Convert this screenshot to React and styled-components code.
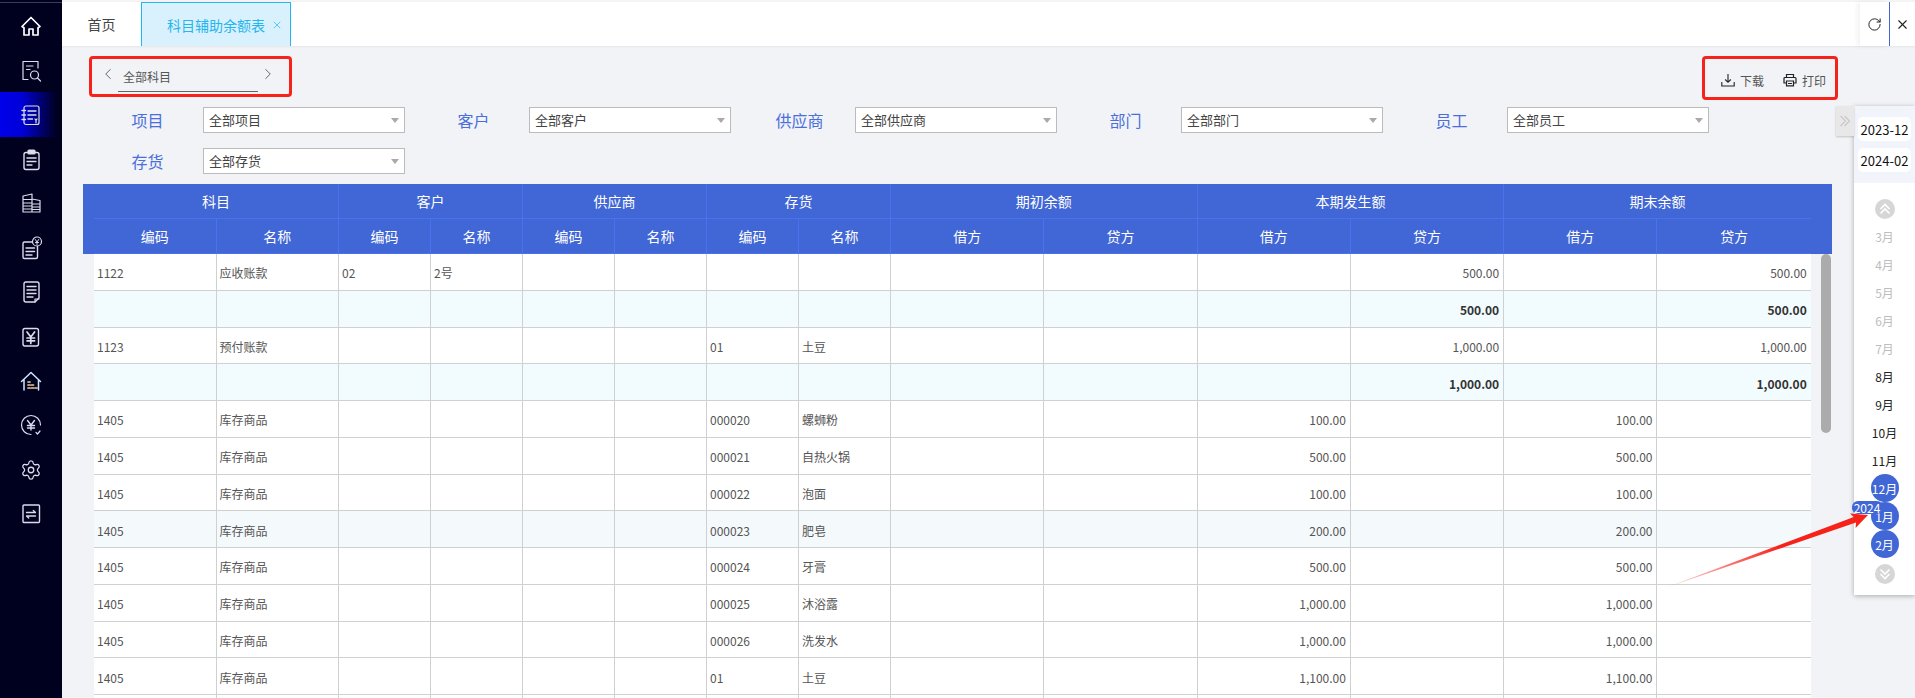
import React from "react";
import styled, { createGlobalStyle } from "styled-components";
import { ChevronLeft, ChevronRight, RotateCw, X, Settings } from "lucide-react";

const Global = createGlobalStyle`
  html, body { margin: 0; padding: 0; height: 100%; overflow: hidden; }
  body { font-family: "Noto Sans CJK SC", "Liberation Sans", sans-serif; }
  #root { height: 100%; }
  * { box-sizing: border-box; }
`;

const BLUE = "#4166d5";
const RED = "#f7231b";

const Page = styled.div`
  position: relative;
  display: flex;
  width: 1915px;
  height: 698px;
  overflow: hidden;
  background: #f1f3f6;
`;

const Sidebar = styled.nav`
  flex: 0 0 62px;
  background: #00001f;
  padding-top: 3.6px;
  position: relative;
  &::before {
    content: "";
    position: absolute;
    left: 0;
    right: 0;
    top: 2px;
    height: 1px;
    background: #3c3c52;
  }
`;

const NavItem = styled.div`
  height: 44.4px;
  display: flex;
  align-items: center;
  justify-content: center;
  color: #dcdcec;
  background: ${(p) =>
    p.$active ? "linear-gradient(90deg, #0000ea 0%, #0000d8 35%, #00001f 92%)" : "transparent"};
`;

const Main = styled.div`
  flex: 1;
  min-width: 0;
  display: flex;
  flex-direction: column;
  padding-top: 2px;
  background: #f4f4f4;
`;

const TabBar = styled.div`
  flex: 0 0 44px;
  display: flex;
  background: #fff;
  box-shadow: 0 1px 2px rgba(0, 0, 0, 0.06);
  position: relative;
`;

const HomeTab = styled.div`
  width: 79px;
  display: flex;
  align-items: center;
  justify-content: center;
  font-size: 14px;
  color: #444;
`;

const ActiveTab = styled.div`
  width: 150px;
  display: flex;
  align-items: center;
  padding-left: 25px;
  gap: 6px;
  font-size: 14px;
  color: #26b5ec;
  background: #d9f1fd;
  border: 1px solid #20b9ef;
  border-bottom: none;
`;

const TabControls = styled.div`
  margin-left: auto;
  display: flex;
`;

const TabControl = styled.div`
  width: ${(p) => p.$w}px;
  display: flex;
  align-items: center;
  justify-content: center;
  color: #222;
  ${(p) => p.$line && `border-left: 1px solid ${BLUE};`}
  ${(p) => p.$shadow && `box-shadow: -3px 0 4px rgba(0,0,0,0.05);`}
`;

const Content = styled.div`
  flex: 1;
  min-height: 0;
  background: #f1f3f6;
  display: flex;
  flex-direction: column;
  overflow: hidden;
`;

const Toolbar = styled.div`
  display: flex;
  justify-content: space-between;
  align-items: flex-start;
  padding: 10px 77px 0 27px;
`;

const Marked = styled.div`
  border: 3px solid ${RED};
  border-radius: 4px;
  display: flex;
`;

const SubjectPicker = styled(Marked)`
  width: 203px;
  height: 41px;
  align-items: flex-start;
  padding: 6px 12px 0 7px;
  color: #555;
  justify-content: space-between;
`;

const SubjectName = styled.div`
  width: 140px;
  height: 27px;
  margin-top: 0;
  padding: 3px 0 0 5px;
  font-size: 12px;
  line-height: 18px;
  color: #555;
  border-bottom: 1px solid #666;
`;

const Actions = styled(Marked)`
  width: 136px;
  height: 44px;
  align-items: center;
  padding: 4px 0 0 16px;
  gap: 19px;
`;

const Action = styled.div`
  display: flex;
  align-items: center;
  gap: 5px;
  font-size: 12px;
  color: #555;
`;

const Filters = styled.div`
  display: grid;
  grid-template-columns: repeat(5, 326px);
  row-gap: 15px;
  padding-left: 30px;
  margin-top: 7px;
`;

const Filter = styled.div`
  display: flex;
  align-items: center;
`;

const FilterLabel = styled.label`
  width: 111px;
  text-align: center;
  font-size: 16px;
  line-height: 26px;
  color: #4a6fdc;
`;

const Select = styled.div`
  width: 202px;
  height: 26px;
  background: #fff;
  border: 1px solid #bbb;
  display: flex;
  align-items: center;
  justify-content: space-between;
  padding: 0 5px 2px;
  font-size: 13px;
  color: #444;
  &::after {
    content: "";
    border-left: 4px solid transparent;
    border-right: 4px solid transparent;
    border-top: 5px solid #aaa;
    margin-top: 2px;
  }
`;

const Table = styled.div`
  margin: 10px 0 0 21px;
  width: 1749px;
`;

const COLS = "122.5px 122.5px repeat(6, 92px) repeat(6, 153.3px)";

const Head = styled.div`
  background: ${BLUE};
  padding: 0 21px 0 11px;
  color: #fff;
  font-size: 14px;
`;

const HeadRow = styled.div`
  display: grid;
  grid-template-columns: ${COLS};
  height: 35px;
  border-bottom: 1px solid #4b72ee;
`;

const HeadCell = styled.div`
  grid-column: span ${(p) => p.$span || 1};
  display: flex;
  align-items: center;
  justify-content: center;
  border-right: 1px solid #4b72ee;
  &:last-child { border-right: none; }
`;

const BodyWrap = styled.div`
  display: flex;
  padding-left: 11px;
`;

const Rows = styled.div`
  width: 1716.8px;
`;

const Row = styled.div`
  display: grid;
  grid-template-columns: ${COLS};
  height: 36.75px;
  background: ${(p) => (p.$kind === "sum" ? "#f2fbfe" : p.$kind === "hover" ? "#f4f9fc" : "#fff")};
  border-bottom: 1px solid #cfd0d2;
  font-size: 12px;
  color: ${(p) => (p.$kind === "sum" ? "#333" : "#555")};
  font-weight: ${(p) => (p.$kind === "sum" ? 700 : 400)};
`;

const Cell = styled.div`
  border-right: 1px solid #cfd0d2;
  padding: 2px ${(p) => (p.$num ? "4px" : "3px")} 0 3px;
  display: flex;
  align-items: center;
  justify-content: ${(p) => (p.$num ? "flex-end" : "flex-start")};
  white-space: nowrap;
  overflow: hidden;
  &:last-child { border-right: none; }
`;

const Track = styled.div`
  margin-left: 10.2px;
  width: 10px;
`;

const Thumb = styled.div`
  height: 179px;
  background: #ababab;
  border-radius: 5px;
`;

const DatePanel = styled.aside`
  position: absolute;
  top: 106px;
  right: 0;
  width: 61px;
  height: 489px;
  background: #fff;
  box-shadow: 0 1px 5px rgba(0, 0, 0, 0.3);
  display: flex;
  flex-direction: column;
  align-items: center;
`;

const Collapse = styled.div`
  position: absolute;
  left: -18px;
  top: 0;
  width: 18px;
  height: 30px;
  background: #e8e8e8;
  box-shadow: 0 1px 2px rgba(0, 0, 0, 0.2);
  display: flex;
  align-items: center;
  justify-content: center;
`;

const Range = styled.div`
  align-self: stretch;
  height: 77px;
  background: #f1f4fb;
  padding: 11px 4px 0;
  display: flex;
  flex-direction: column;
  gap: 7px;
`;

const RangeChip = styled.div`
  height: 24px;
  background: #fff;
  border-radius: 5px;
  display: flex;
  align-items: center;
  justify-content: center;
  font-size: 13px;
  color: #111;
`;

const Round = styled.div`
  width: 20px;
  height: 20px;
  border-radius: 50%;
  background: #d6d6d6;
  display: flex;
  align-items: center;
  justify-content: center;
  margin: ${(p) => p.$m};
`;

const Month = styled.div`
  position: relative;
  width: 28px;
  height: 28px;
  border-radius: 50%;
  display: flex;
  align-items: center;
  justify-content: center;
  font-size: 12px;
  white-space: nowrap;
  color: ${(p) => (p.$state === "off" ? "#bdbdbd" : p.$state === "on" ? "#fff" : "#222")};
  background: ${(p) => (p.$state === "on" ? BLUE : "transparent")};
`;

const YearBadge = styled.div`
  position: absolute;
  left: -19px;
  top: -1px;
  width: 31px;
  height: 13px;
  border-radius: 6px;
  background: ${BLUE};
  color: #fff;
  font-size: 12px;
  line-height: 13px;
  text-align: center;
`;

const Arrow = styled.svg`
  position: absolute;
  left: 1660px;
  top: 508px;
  pointer-events: none;
`;

const I = ({ children, size = 24 }) => (
  <svg width={size} height={size} viewBox="0 0 24 24" fill="none" stroke="currentColor" strokeWidth="1.2" strokeLinecap="round" strokeLinejoin="round">
    {children}
  </svg>
);

const navIcons = [
  <I key="a"><path d="M3 12.5 12 3.5l9 9-2 1.2V21h-5v-6h-4v6H5v-7.3z" stroke="#fff" strokeWidth="1.7" /></I>,
  <I key="b"><path d="M19 10V3.500H4v18h5" /><path d="M7.500 8H14M7.500 11.500H11" /><circle cx="15.500" cy="17" r="4" /><path d="M18.500 20l3 3" /></I>,
  <I key="c"><rect x="5" y="3" width="15" height="18.500" rx="2" /><path d="M3 7.500h3.500M3 12h3.500M3 16.500h3.500M9 8h8M9 12h8M9 16h4.500" strokeWidth="1.4" /><path d="M16 16l1 1.500 1-1.500M17 17.500V20" /></I>,
  <I key="d"><rect x="5" y="5.500" width="15" height="17" rx="2" strokeWidth="1.4" /><rect x="9" y="3" width="7" height="4" rx="1" fill="currentColor" /><path d="M8 11h9" strokeWidth="1.6" /><path d="M8 14.500h9M8 18h5" strokeWidth="1.3" /></I>,
  <I key="e"><path d="M4 21V5l9-2v18H4zM13 8l8 1.500V21h-8M4 8.500h9M4 12h9M4 15h9M4 18h9M13 13h8M13 16h8M13 18.500h8" /></I>,
  <I key="f"><rect x="4" y="6" width="14.500" height="16.500" rx="1.500" strokeWidth="1.4" /><path d="M7 12h8.500M7 15.500h8.500M7 19h6" strokeWidth="1.4" /><circle cx="18" cy="5.500" r="4.500" fill="#00001f" /><path d="M16.300 3.500 18 6l1.700-2.500M18 6v2.500M16.500 6.500h3" strokeWidth="1" /></I>,
  <I key="g"><path d="M5 4a2 2 0 0 1 2-2h11a2 2 0 0 1 2 2v14l-4 4H7a2 2 0 0 1-2-2z" strokeWidth="1.4" /><path d="M8 6.500h9M8 10h9M8 13.500h9M8 17h6" strokeWidth="1.4" /><path d="M16 22v-3h4" /></I>,
  <I key="h"><rect x="4" y="3.500" width="15.500" height="17.500" rx="2" strokeWidth="1.4" /><path d="M8 7l3.800 5 3.800-5M11.800 12v6.500M8 13h7.600M8 15.800h7.600" strokeWidth="1.7" /></I>,
  <I key="i"><path d="M2.500 12.500 12 3.500l9.500 9M5 10.500V21M19.500 10.500V21" stroke="#cfe4ff" strokeWidth="1.5" /><path d="M9 13h2M9 16h2M9 19h2M12.500 16h2M12.500 19h2M16 19h2" stroke="#f0c9a0" strokeWidth="1.7" /></I>,
  <I key="j"><path d="M21.500 12A9.500 9.500 0 1 0 12 21.500" /><path d="M8.500 7.500 12 12l3.500-4.500M12 12v5M8.500 12.500h7M8.500 15h7" strokeWidth="1.4" /><path d="M17 19.500l1.500 1.500 2.500-3" /></I>,
  <Settings key="k" size={22} strokeWidth={1.4} />,
  <I key="l"><rect x="4" y="3" width="16.500" height="17.500" rx="1" strokeWidth="1.4" /><path d="M7.500 10.500h9l-2.200-2M16.500 14h-9l2.200 2" strokeWidth="1.3" /></I>,
];

const DownloadIcon = () => (
  <svg width="14" height="14" viewBox="0 0 14 14" fill="none" stroke="#222" strokeWidth="1.1">
    <path d="M7 1v8M4.200 6.500 7 9.300l2.800-2.800M.8 9v4h12.400V9" />
  </svg>
);

const PrintIcon = () => (
  <svg width="14" height="14" viewBox="0 0 14 14" fill="none" stroke="#222" strokeWidth="1.2">
    <path d="M3.500 4.500V1.500h7v3M3.500 10H1V5.500a1 1 0 0 1 1-1h10a1 1 0 0 1 1 1V10h-2.500" />
    <path d="M3.500 8h7v4.800h-7zM5 10.500h4" />
  </svg>
);

const Chevrons = ({ dir }) => (
  <svg width="14" height="14" viewBox="0 0 14 14" fill="none" stroke="#fff" strokeWidth="1.6">
    {dir === "up" ? <path d="M2.500 7 7 2.500 11.500 7M2.500 11.500 7 7l4.500 4.500" /> : <path d="M2.500 2.500 7 7l4.500-4.500M2.500 7 7 11.500 11.500 7" />}
  </svg>
);

const DoubleRight = () => (
  <svg width="12" height="12" viewBox="0 0 12 12" fill="none" stroke="#c8c8c8" strokeWidth="1.1">
    <path d="M1.500 1 6.500 6l-5 5M5.500 1l5 5-5 5" />
  </svg>
);

const filters = [
  ["项目", "全部项目"],
  ["客户", "全部客户"],
  ["供应商", "全部供应商"],
  ["部门", "全部部门"],
  ["员工", "全部员工"],
  ["存货", "全部存货"],
];

const groups = ["科目", "客户", "供应商", "存货", "期初余额", "本期发生额", "期末余额"];
const subHeads = ["编码", "名称", "编码", "名称", "编码", "名称", "编码", "名称", "借方", "贷方", "借方", "贷方", "借方", "贷方"];

const stock = (code, name, amount, kind) => ({
  kind,
  cells: ["1405", "库存商品", "", "", "", "", code, name, "", "", amount, "", amount, ""],
});

const rows = [
  { cells: ["1122", "应收账款", "02", "2号", "", "", "", "", "", "", "", "500.00", "", "500.00"] },
  { kind: "sum", cells: ["", "", "", "", "", "", "", "", "", "", "", "500.00", "", "500.00"] },
  { cells: ["1123", "预付账款", "", "", "", "", "01", "土豆", "", "", "", "1,000.00", "", "1,000.00"] },
  { kind: "sum", cells: ["", "", "", "", "", "", "", "", "", "", "", "1,000.00", "", "1,000.00"] },
  stock("000020", "螺蛳粉", "100.00"),
  stock("000021", "自热火锅", "500.00"),
  stock("000022", "泡面", "100.00"),
  stock("000023", "肥皂", "200.00", "hover"),
  stock("000024", "牙膏", "500.00"),
  stock("000025", "沐浴露", "1,000.00"),
  stock("000026", "洗发水", "1,000.00"),
  stock("01", "土豆", "1,100.00"),
  { cells: Array(14).fill("") },
];

const months = [
  ["3月", "off"], ["4月", "off"], ["5月", "off"], ["6月", "off"], ["7月", "off"],
  ["8月", "idle"], ["9月", "idle"], ["10月", "idle"], ["11月", "idle"],
  ["12月", "on"], ["1月", "on", "2024"], ["2月", "on"],
];

export default function App() {
  return (
    <Page>
      <Global />
      <Sidebar>
        {navIcons.map((icon, i) => (
          <NavItem key={i} $active={i === 2}>{icon}</NavItem>
        ))}
      </Sidebar>
      <Main>
        <TabBar>
          <HomeTab>首页</HomeTab>
          <ActiveTab>科目辅助余额表<X size={12} strokeWidth={1.4} /></ActiveTab>
          <TabControls>
            <TabControl $w={29} $shadow><RotateCw size={15} strokeWidth={1.6} /></TabControl>
            <TabControl $w={26} $line><X size={15} strokeWidth={1.8} /></TabControl>
          </TabControls>
        </TabBar>
        <Content>
          <Toolbar>
            <SubjectPicker>
              <ChevronLeft size={18} strokeWidth={1.2} />
              <SubjectName>全部科目</SubjectName>
              <ChevronRight size={18} strokeWidth={1.2} />
            </SubjectPicker>
            <Actions>
              <Action><DownloadIcon />下载</Action>
              <Action><PrintIcon />打印</Action>
            </Actions>
          </Toolbar>
          <Filters>
            {filters.map(([label, value]) => (
              <Filter key={label}>
                <FilterLabel>{label}</FilterLabel>
                <Select>{value}</Select>
              </Filter>
            ))}
          </Filters>
          <Table>
            <Head>
              <HeadRow>
                {groups.map((g) => <HeadCell key={g} $span={2}>{g}</HeadCell>)}
              </HeadRow>
              <HeadRow>
                {subHeads.map((h, i) => <HeadCell key={i}>{h}</HeadCell>)}
              </HeadRow>
            </Head>
            <BodyWrap>
              <Rows>
                {rows.map((r, i) => (
                  <Row key={i} $kind={r.kind}>
                    {r.cells.map((c, j) => <Cell key={j} $num={j >= 8}>{c}</Cell>)}
                  </Row>
                ))}
              </Rows>
              <Track><Thumb /></Track>
            </BodyWrap>
          </Table>
        </Content>
      </Main>
      <DatePanel>
        <Collapse><DoubleRight /></Collapse>
        <Range>
          <RangeChip>2023-12</RangeChip>
          <RangeChip>2024-02</RangeChip>
        </Range>
        <Round $m="16px 0 3px"><Chevrons dir="up" /></Round>
        {months.map(([m, state, badge]) => (
          <Month key={m} $state={state}>
            {m}
            {badge && <YearBadge>{badge}</YearBadge>}
          </Month>
        ))}
        <Round $m="6px 0 0"><Chevrons dir="down" /></Round>
      </DatePanel>
      <Arrow width="215" height="85" viewBox="0 0 215 85">
        <defs>
          <linearGradient id="arrowFade" gradientUnits="userSpaceOnUse" x1="5" y1="80" x2="120" y2="38">
            <stop offset="0" stopColor={RED} stopOpacity="0.15" />
            <stop offset="1" stopColor={RED} />
          </linearGradient>
        </defs>
        <polygon points="5,80 196,14.600 195.600,20 208,7 190,5.500 193.800,9" fill="url(#arrowFade)" />
      </Arrow>
    </Page>
  );
}
